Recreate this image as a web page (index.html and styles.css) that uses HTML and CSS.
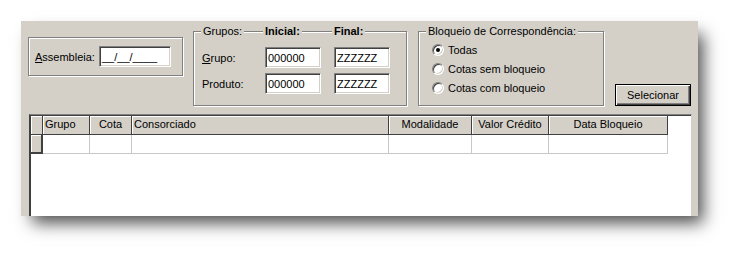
FILE: index.html
```html
<!DOCTYPE html>
<html lang="pt">

<head>
    <meta charset="UTF-8">
    <title>Bloqueio de Correspondência</title>
    <link rel="stylesheet" href="styles.css">
</head>

<body>
    <div class="window">
        <div class="top">
            <div class="box assembleia">
                <label><u>A</u>ssembleia:</label>
                <div class="edit date">__/__/____</div>
            </div>

            <div class="box grupos">
                <div class="caption">
                    <span class="c-first">Grupos:</span>
                    <span class="c-ini">Inicial:</span>
                    <span class="c-fim">Final:</span>
                </div>
                <div class="row">
                    <label><u>G</u>rupo:</label>
                    <div class="edit">000000</div>
                    <div class="edit">ZZZZZZ</div>
                </div>
                <div class="row">
                    <label>Produto:</label>
                    <div class="edit">000000</div>
                    <div class="edit">ZZZZZZ</div>
                </div>
            </div>

            <div class="box bloqueio">
                <div class="caption">
                    <span class="c-first">Bloqueio de Correspondência:</span>
                </div>
                <div class="radio checked"><i></i>Todas</div>
                <div class="radio"><i></i>Cotas sem bloqueio</div>
                <div class="radio"><i></i>Cotas com bloqueio</div>
            </div>

            <button class="btn">Selecionar</button>
        </div>

        <div class="grid">
            <div class="grid-row head">
                <div class="cell ind"></div>
                <div class="cell">Grupo</div>
                <div class="cell center">Cota</div>
                <div class="cell">Consorciado</div>
                <div class="cell center">Modalidade</div>
                <div class="cell center">Valor Crédito</div>
                <div class="cell center">Data Bloqueio</div>
            </div>
            <div class="grid-row data">
                <div class="cell ind"></div>
                <div class="cell"></div>
                <div class="cell"></div>
                <div class="cell"></div>
                <div class="cell"></div>
                <div class="cell"></div>
                <div class="cell"></div>
            </div>
        </div>
    </div>
</body>

</html>
```

FILE: styles.css
```css
html,
body {
    height: 258px;
}
body {
    margin: 0;
    padding-top: 21px;
    box-sizing: border-box;
    background: #fff;
    font-family: "Liberation Sans", Arial, sans-serif;
    font-size: 11px;
    color: #000;
}
.window {
    margin-left: 21px;
    width: 677px;
    height: 195px;
    background: #d4d0c8;
    box-shadow: 8px 10px 16px -3px rgba(0, 0, 0, 0.7);
    overflow: hidden;
    padding-top: 10px;
    box-sizing: border-box;
}
.top {
    display: flex;
    align-items: flex-start;
    height: 75px;
}
.box {
    position: relative;
    box-sizing: border-box;
    border: 1px solid #808080;
    box-shadow: inset 1px 1px 0 #fff, 1px 1px 0 #fff;
}
.assembleia {
    margin: 6px 0 0 7px;
    width: 155px;
    height: 39px;
    display: flex;
    align-items: center;
    padding-left: 6px;
}
.assembleia label {
    width: 64px;
}
.edit {
    box-sizing: border-box;
    width: 56px;
    height: 21px;
    background: #fff;
    border: 1px solid;
    border-color: #808080 #fff #fff #808080;
    box-shadow: inset 1px 1px 0 #404040, inset -1px -1px 0 #d4d0c8;
    padding: 3px 0 0 2px;
    line-height: 14px;
    white-space: nowrap;
}
.edit.date {
    width: 72px;
}
.caption {
    position: absolute;
    top: -8px;
    left: 0;
    right: 0;
    display: flex;
    line-height: 14px;
}
.caption span {
    background: #d4d0c8;
    padding: 0 2px;
}
.caption .c-first {
    margin-left: 7px;
}
.grupos {
    margin-left: 10px;
    width: 214px;
    height: 75px;
    padding: 15px 0 0 8px;
}
.grupos .c-ini,
.grupos .c-fim {
    position: absolute;
    font-weight: bold;
}
.grupos .c-ini {
    left: 69px;
}
.grupos .c-fim {
    left: 138px;
}
.grupos .row {
    display: flex;
    align-items: center;
    height: 21px;
    margin-bottom: 5px;
}
.grupos .row label {
    width: 63px;
}
.grupos .row .edit + .edit {
    margin-left: 13px;
}
.bloqueio {
    margin-left: 11px;
    width: 186px;
    height: 75px;
    padding: 9px 0 0 13px;
}
.radio {
    display: flex;
    align-items: center;
    height: 18px;
    margin-bottom: 1px;
}
.radio i {
    box-sizing: border-box;
    width: 12px;
    height: 12px;
    border-radius: 50%;
    background: #fff;
    border: 1px solid;
    border-color: #808080 #fff #fff #808080;
    box-shadow: inset 1px 1px 0 #404040, inset -1px -1px 0 #d4d0c8;
    margin-right: 4px;
    position: relative;
}
.radio.checked i::after {
    content: "";
    position: absolute;
    left: 3px;
    top: 3px;
    width: 4px;
    height: 4px;
    border-radius: 50%;
    background: #000;
}
.btn {
    margin: 53px 0 0 11px;
    width: 76px;
    height: 22px;
    box-sizing: border-box;
    background: #d4d0c8;
    border: 1px solid #000;
    box-shadow: inset 1px 1px 0 #fff, inset -1px -1px 0 #404040, inset -2px -2px 0 #808080;
    font: inherit;
    color: #000;
    padding: 0;
}
.grid {
    margin: 8px 0 0 8px;
    width: 663px;
    height: 110px;
    box-sizing: border-box;
    background: #fff;
    border: 1px solid;
    border-color: #808080 #d4d0c8 #d4d0c8 #404040;
    box-shadow: inset 1px 1px 0 #404040;
    padding: 1px 0 0 1px;
}
.grid-row {
    display: grid;
    grid-template-columns: 12px 47px 42px 257px 83px 77px 119px;
}
.cell {
    box-sizing: border-box;
    height: 19px;
    line-height: 17px;
    padding: 0 2px;
    white-space: nowrap;
    overflow: hidden;
}
.cell.center {
    text-align: center;
}
.head .cell,
.cell.ind {
    background: #d4d0c8;
    border-right: 1px solid #404040;
    border-bottom: 1px solid #404040;
    box-shadow: inset 1px 1px 0 #fff;
}
.data .cell {
    border-right: 1px solid #c8c8c8;
    border-bottom: 1px solid #c8c8c8;
}
.data .cell.ind {
    border-right: 2px solid #404040;
    border-bottom: 2px solid #404040;
}
```
